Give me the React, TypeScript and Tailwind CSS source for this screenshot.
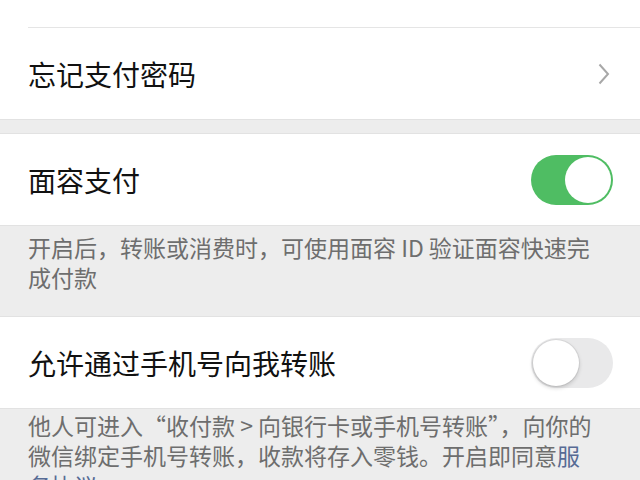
import React, { useState } from 'react';

const font = { fontFamily: '"Noto Sans CJK SC", "Noto Sans", sans-serif' };

// iOS style switch, as in WeChat pay settings
const Toggle = ({ on, onChange }: { on: boolean; onChange: () => void }) => (
  <button
    onClick={onChange}
    className={`relative h-[50px] w-[82px] shrink-0 rounded-full transition-colors ${
      on ? 'bg-[#4fbd63]' : 'bg-[#e9e9ea]'
    }`}
  >
    <span
      className={`absolute top-[2px] h-[46px] w-[46px] rounded-full bg-white ${
        on ? 'left-[34px]' : 'left-[2px] shadow-[0_2px_4px_rgba(0,0,0,0.18),0_0_0_1px_rgba(0,0,0,0.06)]'
      }`}
    />
  </button>
);

const Row = ({ label, right }: { label: string; right: React.ReactNode }) => (
  <div className="flex h-[91px] items-center justify-between bg-white pl-[28px] pr-[27px]">
    <span className="text-[28px] leading-none text-[#111]">{label}</span>
    {right}
  </div>
);

const Note = ({ children, className = '' }: { children: React.ReactNode; className?: string }) => (
  <div
    className={`whitespace-nowrap bg-[#ededed] pl-[28px] text-[23px] leading-[30px] text-[#6e6e6e] ${className}`}
  >
    {children}
  </div>
);

export default function App() {
  const [faceId, setFaceId] = useState(true);
  const [byPhone, setByPhone] = useState(false);

  return (
    <div className="h-[480px] w-[640px] overflow-hidden bg-[#ededed]" style={font}>
      {/* tail of the previous row */}
      <div className="h-[27px] bg-white" />
      <div className="bg-white pl-[28px]">
        <div className="h-px bg-[#e5e5e5]" />
      </div>

      <div className="border-b border-[#e2e2e2]">
        <Row
          label="忘记支付密码"
          right={
            <svg width="12" height="22" viewBox="0 0 12 22" className="mr-[3px]">
              <path d="M1.5 1.5 L10 11 L1.5 20.5" fill="none" stroke="#a8a8a8" strokeWidth="2" />
            </svg>
          }
        />
      </div>

      <div className="h-[13px]" />

      <div className="border-y border-[#e2e2e2]">
        <Row label="面容支付" right={<Toggle on={faceId} onChange={() => setFaceId(!faceId)} />} />
      </div>
      <Note className="h-[90px] pt-[6px]">
        开启后，转账或消费时，可使用面容 ID 验证面容快速完
        <br />
        成付款
      </Note>

      <div className="border-y border-[#e2e2e2]">
        <Row label="允许通过手机号向我转账" right={<Toggle on={byPhone} onChange={() => setByPhone(!byPhone)} />} />
      </div>
      <Note className="pt-[1px]">
        他人可进入“收付款 &gt; 向银行卡或手机号转账”，向你的
        <br />
        微信绑定手机号转账，收款将存入零钱。开启即同意<span className="text-[#576b95]">服</span>
        <br />
        <span className="text-[#576b95]">务协议</span>
      </Note>
    </div>
  );
}
